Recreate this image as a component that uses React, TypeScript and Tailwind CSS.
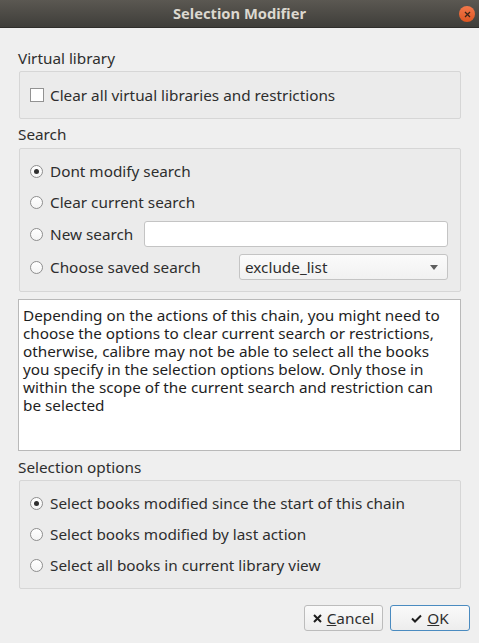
import { useState } from "react";

const font = { fontFamily: '"Noto Sans", "Open Sans", sans-serif' };

function Radio({ checked, label, onClick }: { checked: boolean; label: string; onClick: () => void }) {
  return (
    <button type="button" onClick={onClick} className="flex items-center gap-[7px] text-left">
      <span className="flex h-[13px] w-[13px] items-center justify-center rounded-full border border-[#8e8e8e] bg-gradient-to-b from-white to-[#f4f4f4]">
        {checked && <span className="h-[5px] w-[5px] rounded-full bg-[#2f2f2f]" />}
      </span>
      <span className="whitespace-nowrap">{label}</span>
    </button>
  );
}

export default function App() {
  const [clearVl, setClearVl] = useState(false);
  const [search, setSearch] = useState(0);
  const [selection, setSelection] = useState(0);

  return (
    <div style={font} className="flex h-[643px] w-[479px] flex-col bg-[#efefef] text-[15.3px] text-[#2e2e2e]">
      {/* title bar */}
      <div className="relative flex h-[28px] items-center justify-center border-b border-[#2f2e2b] bg-gradient-to-b from-[#5b5852] to-[#3f3e3a]">
        <span className="text-[14.7px] font-bold text-[#dcd8cf]">Selection Modifier</span>
        <div className="absolute right-[4px] top-[6px] flex h-[16px] w-[16px] items-center justify-center rounded-full bg-gradient-to-b from-[#f2784a] to-[#dd5520]">
          <svg width="7" height="7" viewBox="0 0 7 7">
            <path d="M1 1 L6 6 M6 1 L1 6" stroke="#3a2418" strokeWidth="1.3" />
          </svg>
        </div>
      </div>

      <div className="flex flex-col px-[18px]">
        <div className="mt-[20px] h-[20px] leading-[20px]">Virtual library</div>
        <div className="ml-px mt-[3px] flex h-[48px] items-center rounded-[2px] border border-[#d6d6d6] bg-[#ebebeb] pl-[10px]">
          <button type="button" onClick={() => setClearVl(!clearVl)} className="flex items-center gap-[6px]">
            <span className="flex h-[14px] w-[14px] items-center justify-center border border-[#929292] bg-white">
              {clearVl && (
                <svg width="10" height="10" viewBox="0 0 10 10">
                  <path d="M1.5 5 L4 7.5 L8.5 2" stroke="#2f2f2f" strokeWidth="1.6" fill="none" />
                </svg>
              )}
            </span>
            <span>Clear all virtual libraries and restrictions</span>
          </button>
        </div>

        <div className="mt-[5px] h-[20px] leading-[20px]">Search</div>
        <div className="ml-px mt-[4px] flex h-[144px] flex-col rounded-[2px] border border-[#d6d6d6] bg-[#ebebeb] pl-[10px] pr-[12px] pt-[9px]">
          <div className="flex h-[26px] items-center">
            <Radio checked={search === 0} label="Dont modify search" onClick={() => setSearch(0)} />
          </div>
          <div className="mt-[5px] flex h-[26px] items-center">
            <Radio checked={search === 1} label="Clear current search" onClick={() => setSearch(1)} />
          </div>
          <div className="mt-[6px] flex h-[26px] items-center">
            <Radio checked={search === 2} label="New search" onClick={() => setSearch(2)} />
            <input className="ml-auto h-[26px] w-[304px] rounded-[3px] border border-[#c4c4c4] bg-white px-[5px] outline-none" />
          </div>
          <div className="mt-[7px] flex h-[26px] items-center">
            <Radio checked={search === 3} label="Choose saved search" onClick={() => setSearch(3)} />
            <div className="ml-auto flex h-[26px] w-[209px] items-center justify-between rounded-[3px] border border-[#c4c4c4] bg-gradient-to-b from-[#fbfbfb] to-[#f1f1f1] pl-[5px] pr-[9px]">
              <span>exclude_list</span>
              <svg width="8" height="5" viewBox="0 0 8 5">
                <path d="M0 0 H8 L4 5 Z" fill="#5e5e5e" />
              </svg>
            </div>
          </div>
        </div>

        <div className="mt-[7px] h-[152px] whitespace-nowrap border border-[#b9b9b9] bg-white px-[4px] pt-[6px] leading-[18px] text-[#1e1e1e]">
          Depending on the actions of this chain, you might need to
          <br />
          choose the options to clear current search or restrictions,
          <br />
          otherwise, calibre may not be able to select all the books
          <br />
          you specify in the selection options below. Only those in
          <br />
          within the scope of the current search and restriction can
          <br />
          be selected
        </div>

        <div className="mt-[6px] h-[20px] leading-[20px]">Selection options</div>
        <div className="ml-px mt-[3px] flex h-[109px] flex-col rounded-[2px] border border-[#d6d6d6] bg-[#ebebeb] pl-[10px] pt-[9px]">
          <div className="flex h-[26px] items-center">
            <Radio checked={selection === 0} label="Select books modified since the start of this chain" onClick={() => setSelection(0)} />
          </div>
          <div className="mt-[5px] flex h-[26px] items-center">
            <Radio checked={selection === 1} label="Select books modified by last action" onClick={() => setSelection(1)} />
          </div>
          <div className="mt-[5px] flex h-[26px] items-center">
            <Radio checked={selection === 2} label="Select all books in current library view" onClick={() => setSelection(2)} />
          </div>
        </div>
      </div>

      <div className="mt-[16px] flex justify-end gap-[7px] pr-[9px]">
        <button type="button" className="flex h-[26px] w-[79px] items-center justify-center gap-[5px] rounded-[3px] border border-[#bcbcbc] bg-gradient-to-b from-[#fafafa] to-[#ededed]">
          <svg width="9" height="9" viewBox="0 0 9 9">
            <path d="M1 1 L8 8 M8 1 L1 8" stroke="#1e1e1e" strokeWidth="2" />
          </svg>
          <span>
            <u>C</u>ancel
          </span>
        </button>
        <button type="button" className="flex h-[26px] w-[80px] items-center justify-center gap-[5px] rounded-[3px] border border-[#4a8bc0] bg-gradient-to-b from-[#fafafa] to-[#ededed]">
          <svg width="11" height="9" viewBox="0 0 11 9">
            <path d="M1 4.5 L4 7.5 L10 1.5" stroke="#1e1e1e" strokeWidth="2" fill="none" />
          </svg>
          <span>
            <u>O</u>K
          </span>
        </button>
      </div>
    </div>
  );
}
